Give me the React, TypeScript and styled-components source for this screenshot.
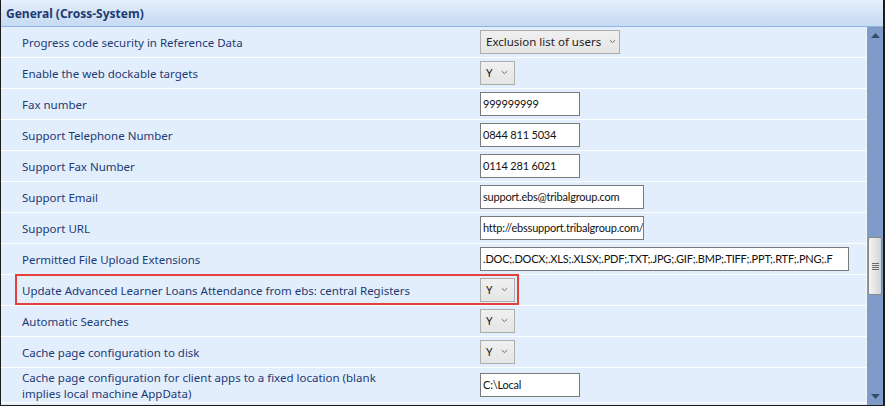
import React from "react"
import styled, {createGlobalStyle} from "styled-components"

const GlobalStyle = createGlobalStyle`
  html, body {
    margin: 0;
    padding: 0;
    background: #ffffff;
  }
  body {
    font-family: "Noto Sans", "Open Sans", sans-serif;
  }
`

type Setting = {
  label: string
  kind: "select" | "text"
  value: string
  width?: number
  highlight?: boolean
}

const settings: Setting[] = [
  {label: "Progress code security in Reference Data", kind: "select", value: "Exclusion list of users", width: 140},
  {label: "Enable the web dockable targets", kind: "select", value: "Y", width: 35},
  {label: "Fax number", kind: "text", value: "999999999", width: 100},
  {label: "Support Telephone Number", kind: "text", value: "0844 811 5034", width: 100},
  {label: "Support Fax Number", kind: "text", value: "0114 281 6021", width: 100},
  {label: "Support Email", kind: "text", value: "support.ebs@tribalgroup.com", width: 164},
  {label: "Support URL", kind: "text", value: "http://ebssupport.tribalgroup.com/", width: 164},
  {label: "Permitted File Upload Extensions", kind: "text", value: ".DOC;.DOCX;.XLS;.XLSX;.PDF;.TXT;.JPG;.GIF;.BMP;.TIFF;.PPT;.RTF;.PNG;.F", width: 369},
  {label: "Update Advanced Learner Loans Attendance from ebs: central Registers", kind: "select", value: "Y", width: 35, highlight: true},
  {label: "Automatic Searches", kind: "select", value: "Y", width: 35},
  {label: "Cache page configuration to disk", kind: "select", value: "Y", width: 35},
  {label: "Cache page configuration for client apps to a fixed location (blank implies local machine AppData)", kind: "text", value: "C:\\Local", width: 100},
]

const Chevron = () => (
  <svg width="7" height="5" viewBox="0 0 7 5">
    <path d="M0.8 1.2 L3.5 3.6 L6.2 1.2" fill="none" stroke="#6d6d6d" strokeWidth="1"/>
  </svg>
)

const ArrowUp = () => (
  <svg width="9" height="5" viewBox="0 0 9 5">
    <path d="M4.5 0 L9 5 L0 5 Z" fill="#3a4a6a"/>
  </svg>
)

const ArrowDown = () => (
  <svg width="9" height="5" viewBox="0 0 9 5">
    <path d="M0 0 L9 0 L4.5 5 Z" fill="#3a4a6a"/>
  </svg>
)

const App = () => {
  return (
    <>
      <GlobalStyle/>
      <Window>
        <Header>General (Cross-System)</Header>
        <Body>
          <Rows>
            {settings.map((s, i) => (
              <Row key={i} $tall={i === settings.length - 1}>
                <LabelCell>
                  <Label>{s.label}</Label>
                </LabelCell>
                <Control>
                  {s.kind === "select" ? (
                    <SelectBox style={{width: s.width}}>
                      <span>{s.value}</span>
                      <Chevron/>
                    </SelectBox>
                  ) : (
                    <TextBox style={{width: s.width}}>{s.value}</TextBox>
                  )}
                </Control>
                {s.highlight && <Highlight/>}
              </Row>
            ))}
          </Rows>
          <ScrollBar>
            <ArrowButton><ArrowUp/></ArrowButton>
            <Track>
              <Thumb>
                <Grip><i/><i/><i/><i/></Grip>
              </Thumb>
            </Track>
            <ArrowButton><ArrowDown/></ArrowButton>
          </ScrollBar>
        </Body>
      </Window>
    </>
  )
}

const Window = styled.div`
  width: 885px;
  height: 406px;
  box-sizing: border-box;
  border: 1px solid #1c1c1c;
  border-top: none;
  border-right-width: 2px;
  display: flex;
  flex-direction: column;
  overflow: hidden;
  background: #e3eefc;
`

const Header = styled.div`
  height: 26px;
  flex-shrink: 0;
  display: flex;
  align-items: center;
  padding-left: 5px;
  background: linear-gradient(to bottom, #e6effb 0%, #d3e3f7 55%, #c6daf3 100%);
  border-bottom: 1px solid #8fb3e3;
  color: #1d3a70;
  font-weight: 700;
  font-size: 12px;
`

const Body = styled.div`
  flex: 1;
  display: flex;
  min-height: 0;
`

const Rows = styled.div`
  flex: 1;
  display: flex;
  flex-direction: column;
  overflow: hidden;
  border-right: 1px solid #f2f7fe;
`

const Row = styled.div<{ $tall?: boolean }>`
  position: relative;
  flex-shrink: 0;
  height: ${p => p.$tall ? "34px" : "30px"};
  border-bottom: 1px solid #ffffff;
  display: flex;
  align-items: center;
`

const LabelCell = styled.div`
  width: 458px;
  padding-left: 21px;
  flex-shrink: 0;
`

const Label = styled.div`
  max-width: 391px;
  padding-top: 2px;
  color: #1c3a76;
  font-size: 11.5px;
  line-height: 16px;
`

const Control = styled.div`
  display: flex;
  align-items: center;
`

const SelectBox = styled.div`
  height: 24px;
  box-sizing: border-box;
  display: flex;
  align-items: center;
  justify-content: space-between;
  padding: 0 6px 1px 5px;
  border: 1px solid #adadad;
  background: linear-gradient(to bottom, #f0f0f0, #e5e5e5);
  color: #222;
  font-size: 11.5px;
  white-space: nowrap;
  svg {
    margin-left: 8px;
    flex-shrink: 0;
  }
`

const TextBox = styled.div`
  height: 24px;
  box-sizing: border-box;
  display: flex;
  align-items: center;
  padding: 0 0 1px 2px;
  border: 1px solid #7a7a7a;
  background: #ffffff;
  color: #111;
  font-family: Lato, "Noto Sans", sans-serif;
  font-size: 11px;
  letter-spacing: -0.2px;
  white-space: nowrap;
  overflow: hidden;
`

const Highlight = styled.div`
  position: absolute;
  left: 14px;
  top: -1px;
  width: 504px;
  height: 31px;
  box-sizing: border-box;
  border: 2px solid #e4403c;
  pointer-events: none;
`

const ScrollBar = styled.div`
  width: 16px;
  flex-shrink: 0;
  display: flex;
  flex-direction: column;
  background: #7f9cc8;
`

const ArrowButton = styled.div`
  height: 17px;
  display: flex;
  align-items: center;
  justify-content: center;
`

const Track = styled.div`
  flex: 1;
  padding-top: 193px;
`

const Thumb = styled.div`
  height: 58px;
  margin: 0 1px;
  box-sizing: border-box;
  border: 1px solid #8a8a8a;
  border-radius: 2px;
  background: linear-gradient(to right, #f4f4f4, #e2e2e2 60%, #d4d4d4);
  display: flex;
  align-items: center;
  justify-content: center;
`

const Grip = styled.div`
  display: flex;
  flex-direction: column;
  gap: 1px;
  i {
    display: block;
    width: 7px;
    height: 1px;
    background: #6a6a6a;
  }
`

export default App
